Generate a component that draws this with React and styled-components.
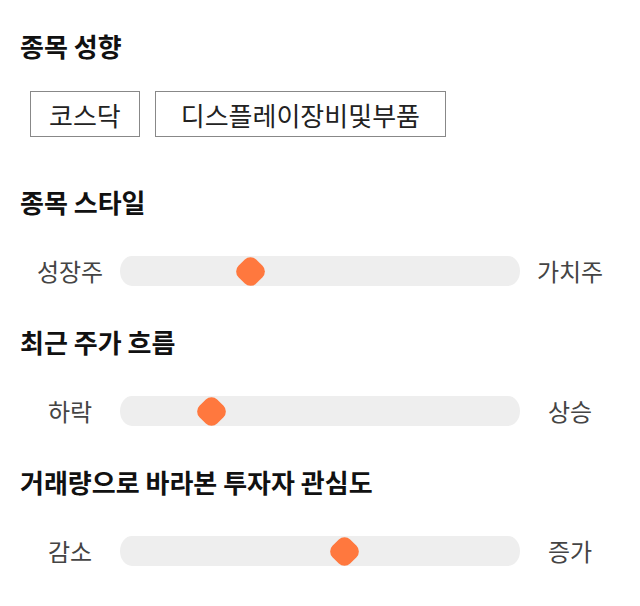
import React from "react";
import styled, { createGlobalStyle } from "styled-components";

const GlobalStyle = createGlobalStyle`
  body {
    margin: 0;
    background: #ffffff;
    font-family: "Noto Sans CJK KR", "Noto Sans", sans-serif;
  }
`;

const Page = styled.div`
  width: 640px;
  padding: 30px 20px 20px;
  box-sizing: border-box;
`;

const Section = styled.section`
  margin-bottom: ${(p) => p.$gap || 40}px;
`;

const Title = styled.h2`
  margin: 0;
  font-size: 26px;
  line-height: 32px;
  font-weight: 700;
  color: #111111;
`;

const ChipRow = styled.div`
  display: flex;
  gap: 15px;
  margin-top: 29px;
  padding-left: 10px;
`;

const Chip = styled.div`
  height: 46px;
  box-sizing: border-box;
  padding: 0 ${(p) => (p.$wide ? 25 : 18)}px;
  border: 1px solid #888888;
  display: flex;
  align-items: center;
  font-size: 26px;
  color: #222222;
`;

const SliderRow = styled.div`
  display: grid;
  grid-template-columns: 100px 1fr 100px;
  grid-template-rows: 30px;
  align-items: center;
  margin-top: 38px;
`;

const Label = styled.span`
  text-align: center;
  font-size: 24px;
  line-height: 30px;
  color: #444444;
`;

const Track = styled.div`
  position: relative;
  height: 30px;
  background: #eeeeee;
  border-radius: 12px / 15px;
`;

const Thumb = styled.div`
  position: absolute;
  top: 50%;
  width: 25px;
  height: 25px;
  margin: -12.5px 0 0 -12.5px;
  background: #ff783e;
  border-radius: 8px;
  transform: rotate(45deg);
`;

const sliders = [
  { title: "종목 스타일", left: "성장주", right: "가치주", value: 32.5 },
  { title: "최근 주가 흐름", left: "하락", right: "상승", value: 22.75 },
  { title: "거래량으로 바라본 투자자 관심도", left: "감소", right: "증가", value: 56 },
];

export default function App() {
  return (
    <Page>
      <GlobalStyle />
      <Section $gap={49}>
        <Title>종목 성향</Title>
        <ChipRow>
          <Chip>코스닥</Chip>
          <Chip $wide>디스플레이장비및부품</Chip>
        </ChipRow>
      </Section>
      {sliders.map((s) => (
        <Section key={s.title}>
          <Title>{s.title}</Title>
          <SliderRow>
            <Label>{s.left}</Label>
            <Track>
              <Thumb style={{ left: `${s.value}%` }} />
            </Track>
            <Label>{s.right}</Label>
          </SliderRow>
        </Section>
      ))}
    </Page>
  );
}
